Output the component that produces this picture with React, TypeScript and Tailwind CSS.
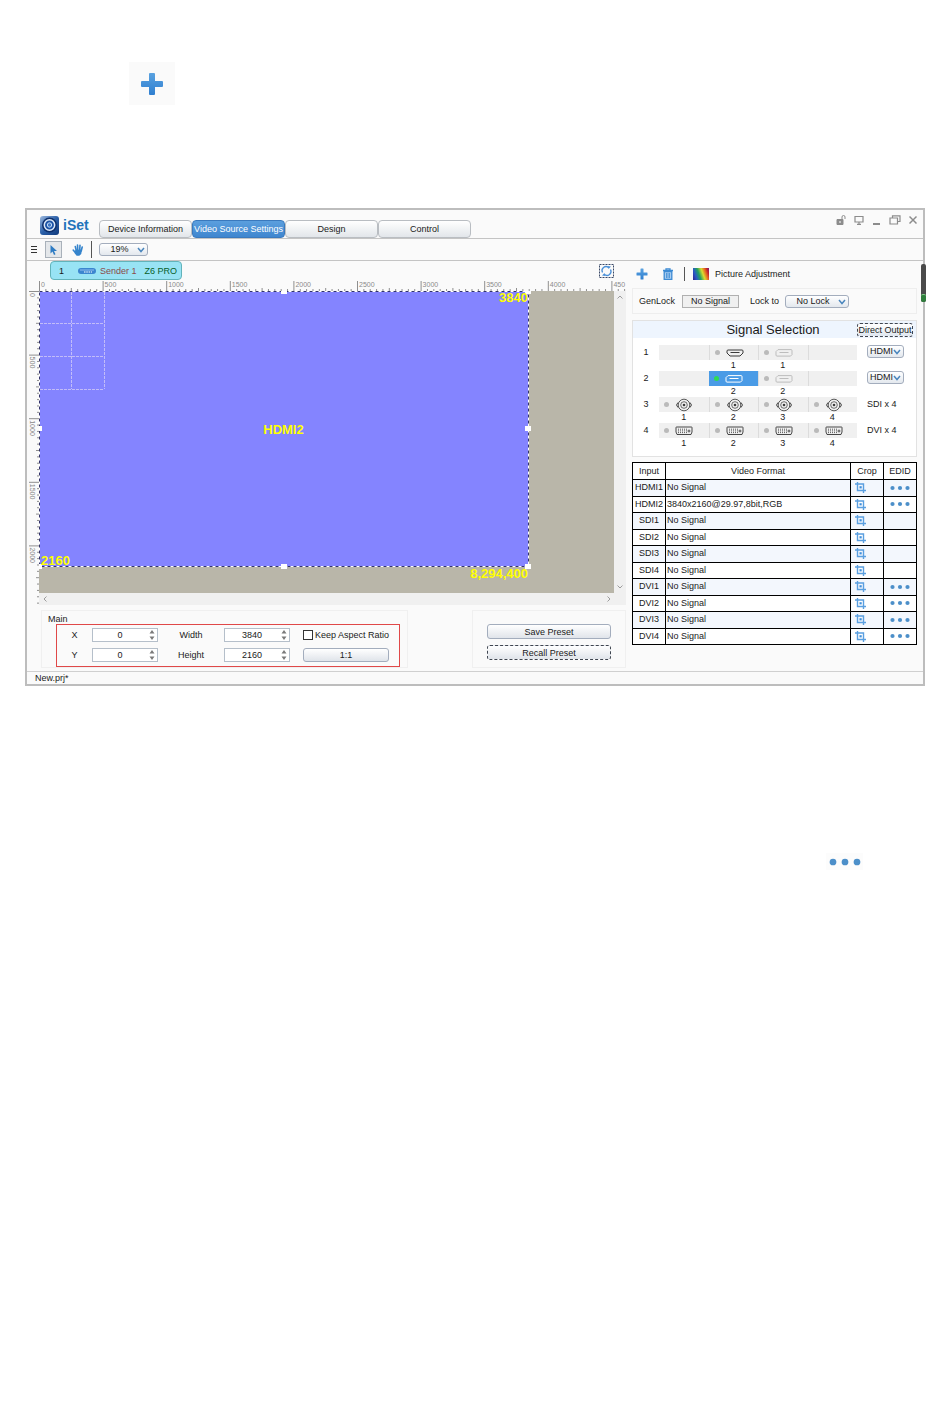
import React from 'react';
import { clsx } from 'clsx';

const SCALE = 0.1272;

const tabs = ['Device Information', 'Video Source Settings', 'Design', 'Control'];

const inputs = [
  { name: 'HDMI1', format: 'No Signal', edid: true },
  { name: 'HDMI2', format: '3840x2160@29.97,8bit,RGB', edid: true },
  { name: 'SDI1', format: 'No Signal', edid: false },
  { name: 'SDI2', format: 'No Signal', edid: false },
  { name: 'SDI3', format: 'No Signal', edid: false },
  { name: 'SDI4', format: 'No Signal', edid: false },
  { name: 'DVI1', format: 'No Signal', edid: true },
  { name: 'DVI2', format: 'No Signal', edid: true },
  { name: 'DVI3', format: 'No Signal', edid: true },
  { name: 'DVI4', format: 'No Signal', edid: true },
];

type Port = 'hdmi' | 'hdmi-off' | 'hdmi-active' | 'sdi' | 'dvi' | null;

interface SignalRow {
  row: number;
  ports: Port[];
  labels: string[];
  type: string;
  selectable: boolean;
}

const signalRows: SignalRow[] = [
  { row: 1, ports: [null, 'hdmi', 'hdmi-off', null], labels: ['', '1', '1', ''], type: 'HDMI', selectable: true },
  { row: 2, ports: [null, 'hdmi-active', 'hdmi-off', null], labels: ['', '2', '2', ''], type: 'HDMI', selectable: true },
  { row: 3, ports: ['sdi', 'sdi', 'sdi', 'sdi'], labels: ['1', '2', '3', '4'], type: 'SDI x 4', selectable: false },
  { row: 4, ports: ['dvi', 'dvi', 'dvi', 'dvi'], labels: ['1', '2', '3', '4'], type: 'DVI x 4', selectable: false },
];

const PlusIcon = ({ className }: { className?: string }) => (
  <svg viewBox="0 0 24 24" className={className}>
    <defs>
      <linearGradient id="plusFill" x1="0" y1="0" x2="0" y2="1">
        <stop offset="0" stopColor="#5aa2e0" />
        <stop offset="1" stopColor="#2f7fd0" />
      </linearGradient>
    </defs>
    <path
      d="M10 1h4a1 1 0 0 1 1 1v7h7a1 1 0 0 1 1 1v4a1 1 0 0 1-1 1h-7v7a1 1 0 0 1-1 1h-4a1 1 0 0 1-1-1v-7h-7a1 1 0 0 1-1-1v-4a1 1 0 0 1 1-1h7v-7a1 1 0 0 1 1-1z"
      fill="url(#plusFill)"
    />
  </svg>
);

const DotsIcon = ({ className }: { className?: string }) => (
  <svg viewBox="0 0 20 6" className={className} fill="#4c8fc9">
    <circle cx="2.500" cy="3" r="2.100" />
    <circle cx="10" cy="3" r="2.100" />
    <circle cx="17.500" cy="3" r="2.100" />
  </svg>
);

const CropIcon = () => (
  <svg viewBox="0 0 11 11" className="h-[11px] w-[11px]" fill="none" stroke="#5a9fe0">
    <path d="M0 2h8.500v9M2.500 0v8.500h8.500" strokeWidth="1.400" />
    <rect x="4.500" y="4.200" width="2.200" height="2.200" fill="#3f8fdc" stroke="none" />
  </svg>
);

const Logo = () => (
  <svg viewBox="0 0 19 19" className="h-[19px] w-[19px]">
    <defs>
      <linearGradient id="logoFill" x1="0" y1="0" x2="1" y2="1">
        <stop offset="0" stopColor="#9db9de" />
        <stop offset="0.500" stopColor="#2a5fa8" />
        <stop offset="1" stopColor="#123b7c" />
      </linearGradient>
    </defs>
    <rect width="19" height="19" rx="3" fill="url(#logoFill)" />
    <circle cx="9.500" cy="9" r="7.500" fill="#0d2f6b" />
    <circle cx="9.500" cy="9" r="5.200" fill="#1d54a6" stroke="#dbe8f8" strokeWidth="1.500" />
    <circle cx="9.500" cy="9" r="2.200" fill="#3f78c4" stroke="#c4dbf5" />
  </svg>
);

const PortIcon = ({ port }: { port: Exclude<Port, null> }) => {
  if (port === 'sdi') {
    return (
      <svg viewBox="0 0 18 14" className="h-[14px] w-[18px]" fill="none" stroke="#4a4a4a">
        <circle cx="9" cy="7" r="5.800" strokeWidth="0.900" />
        <circle cx="9" cy="7" r="3.300" strokeWidth="0.800" />
        <circle cx="9" cy="7" r="1.300" fill="#3c3c3c" stroke="none" />
        <path d="M3 4.500l-1.500 2.500 1.500 2.500M15 4.500l1.500 2.500-1.500 2.500" />
      </svg>
    );
  }
  if (port === 'dvi') {
    return (
      <svg viewBox="0 0 18 10" className="h-[10px] w-[18px]" fill="none" stroke="#333333">
        <path d="M1.500 1h15a0.500 0.500 0 0 1 0.500 0.500v4.500l-1 2.500h-14l-1-2.500v-4.500a0.500 0.500 0 0 1 0.500-0.500z" strokeWidth="0.900" />
        <path d="M3 3.200h9M3 4.900h9M3 6.600h9" strokeDasharray="1 1" strokeWidth="0.800" />
        <path d="M12.500 5h3M14 3.500v3" strokeWidth="0.800" />
      </svg>
    );
  }
  const color = port === 'hdmi' ? '#3a3a3a' : port === 'hdmi-off' ? '#bdbdbd' : '#ffffff';
  return (
    <svg viewBox="0 0 18 8" className="h-2 w-[18px]" fill="none" stroke={color}>
      {port === 'hdmi' ? (
        <path d="M2 1h14a1 1 0 0 1 1 1v2l-3 3h-10l-3-3v-2a1 1 0 0 1 1-1z" />
      ) : (
        <path d="M3 0.600h13a1 1 0 0 1 1 1v4l-1.500 1.500h-13.500a1 1 0 0 1-1-1v-3.500z" />
      )}
      <path d="M4.500 3.500h9" />
    </svg>
  );
};

interface SelectBoxProps {
  label: string;
  value: string;
  className: string;
}

const SelectBox: React.FC<SelectBoxProps> = ({ label, value, className }) => (
  <span className={clsx('relative inline-flex', className)}>
    <select
      aria-label={label}
      defaultValue={value}
      className="h-[13px] w-full appearance-none rounded-[3px] border border-[#a3adbd] bg-linear-to-b from-white to-[#e3e8ee] pr-2 text-center text-[9px] leading-[11px]"
    >
      <option>{value}</option>
    </select>
    <svg viewBox="0 0 8 6" className="pointer-events-none absolute top-1 right-[3px] h-[6px] w-2" fill="none" stroke="#4a86bd" strokeWidth="1.500">
      <path d="M1 1l3 3.500 3-3.500" />
    </svg>
  </span>
);

const NumberField = ({ id, label, value }: { id: string; label: string; value: string }) => (
  <>
    <label htmlFor={id} className="text-center">
      {label}
    </label>
    <div className="flex h-[14px] items-center border border-[#b5bfca] bg-white">
      <input id={id} type="text" defaultValue={value} className="w-full min-w-0 flex-1 text-center outline-none" />
      <svg viewBox="0 0 8 12" className="h-3 w-[10px] shrink-0" fill="#7a7a7a">
        <path d="M1.500 4.500l2.500-3.500 2.500 3.500zM1.500 7.500l2.500 3.500 2.500-3.500z" />
      </svg>
    </div>
  </>
);

const ticks = (max: number) => {
  const list: number[] = [];
  for (let v = 0; v <= max; v += 50) list.push(v);
  return list;
};

const rulerLabel = (v: number) => (v === 4500 ? '450' : String(v));

const HorizontalRuler = () => (
  <svg className="h-[11px] min-w-0 flex-1 overflow-hidden" stroke="#8f8f8f">
    {ticks(4600).map((v) => (
      <line key={v} x1={v * SCALE + 0.5} x2={v * SCALE + 0.5} y1={v % 500 === 0 ? 1 : v % 250 === 0 ? 8 : 9} y2="11" />
    ))}
    {ticks(4500).filter((v) => v % 500 === 0).map((v) => (
      <text key={v} x={v * SCALE + 2} y="7" fontSize="7" fill="#8a8a8a" stroke="none">
        {rulerLabel(v)}
      </text>
    ))}
  </svg>
);

const VerticalRuler = () => (
  <svg className="w-3 shrink-0 self-stretch overflow-hidden" stroke="#8f8f8f">
    {ticks(2450).map((v) => (
      <line key={v} y1={v * SCALE + 0.5} y2={v * SCALE + 0.5} x1={v % 500 === 0 ? 2 : v % 250 === 0 ? 9 : 10} x2="12" />
    ))}
    {ticks(2000).filter((v) => v % 500 === 0).map((v) => (
      <text key={v} transform={`translate(3 ${v * SCALE + 2}) rotate(90)`} fontSize="7" fill="#8a8a8a" stroke="none">
        {v}
      </text>
    ))}
  </svg>
);

const handles = [
  [245, 0],
  [489, 0],
  [0, 137],
  [489, 137],
  [0, 275],
  [245, 275],
  [489, 275],
];

const Canvas = () => (
  <div className="relative h-[302px] min-w-0 flex-1 overflow-hidden bg-[#b9b6a9]">
    <svg className="absolute top-0 left-0 h-[302px] w-[520px]" fill="none">
      <rect x="0.500" y="0.500" width="489" height="275" fill="#8484ff" stroke="#ffffff" />
      <rect x="0.500" y="0.500" width="489" height="275" stroke="#33336b" strokeDasharray="3 3" />
      <path d="M32.500 1v97M65.500 1v97M1 32.500h64M1 65.500h64M1 98.500h64" stroke="#c2bcf8" strokeDasharray="3 1" />
      {handles.map(([x, y]) => (
        <rect key={`${x}-${y}`} x={x - 3} y={y - 2} width="6" height="5" fill="#ffffff" />
      ))}
    </svg>
    <div className="absolute top-0 left-0 flex h-[276px] w-[489px] items-center justify-center text-[13px] leading-[13px] font-bold text-[#ffff00]">
      <span>HDMI2</span>
      <span className="absolute top-0 right-0">3840</span>
      <span className="absolute bottom-0 left-0.5">2160</span>
      <span className="absolute top-full right-0">8,294,400</span>
    </div>
  </div>
);

const TitleBar = () => (
  <header className="flex h-[29px] items-end border-b border-[#c4c4c4] pl-[13px]">
    <div className="flex w-[59px] items-center gap-1 self-center pt-0.5">
      <Logo />
      <span className="text-[14px] leading-4 font-bold text-[#2174bb]">iSet</span>
    </div>
    <nav className="flex">
      {tabs.map((tab) => (
        <button
          key={tab}
          type="button"
          className={clsx(
            'h-[18px] w-[93px] rounded-[4px] border whitespace-nowrap',
            tab === 'Video Source Settings'
              ? 'border-[#3a79bd] bg-linear-to-b from-[#5b9fde] to-[#3f86cf] text-white'
              : 'border-[#b9bdc2] bg-linear-to-b from-white to-[#e2e6ea]'
          )}
        >
          {tab}
        </button>
      ))}
    </nav>
    <div className="mr-[6px] mb-[13px] ml-auto flex items-center gap-2 text-[#8c8c8c]">
      <button type="button" aria-label="Lock">
        <svg viewBox="0 0 10 10" className="h-[10px] w-[10px]" fill="none" stroke="currentColor">
          <path d="M1 4.500h6v5h-6z" fill="currentColor" />
          <path d="M6 4v-2a1.500 1.500 0 0 1 3 0v2" />
          <path d="M4 6v2" stroke="#ffffff" />
        </svg>
      </button>
      <button type="button" aria-label="Screen">
        <svg viewBox="0 0 10 10" className="h-[10px] w-[10px]" fill="none" stroke="currentColor" strokeWidth="1.200">
          <path d="M1 1.500h8v5.500h-8zM3 9.300h4M5 7v2" />
        </svg>
      </button>
      <button type="button" aria-label="Minimize">
        <svg viewBox="0 0 9 10" className="h-[10px] w-[9px]" stroke="currentColor" strokeWidth="2">
          <path d="M1 9h7" />
        </svg>
      </button>
      <button type="button" aria-label="Restore">
        <svg viewBox="0 0 12 10" className="h-[10px] w-3" fill="none" stroke="currentColor" strokeWidth="1.200">
          <path d="M1 3h7.500v6h-7.500zM3.500 3v-2.200h7.500v5.700h-2.500" />
        </svg>
      </button>
      <button type="button" aria-label="Close">
        <svg viewBox="0 0 8 10" className="h-[10px] w-2" stroke="currentColor" strokeWidth="1.500">
          <path d="M0.500 1.500l7 7M7.500 1.500l-7 7" />
        </svg>
      </button>
    </div>
  </header>
);

const Toolbar = () => (
  <div className="flex h-[22px] items-center border-b border-[#c4c4c4] pl-1">
    <button type="button" aria-label="Menu" className="w-[14px]">
      <svg viewBox="0 0 6 7" className="h-[7px] w-[6px]" stroke="#333333">
        <path d="M0 0.500h6M0 3.500h6M0 6.500h6" />
      </svg>
    </button>
    <button type="button" aria-label="Select" className="flex h-[17px] w-[17px] items-center justify-center border border-[#a9b1ba] bg-[#e4e7ea]">
      <svg viewBox="0 0 8 10" className="h-[10px] w-2" fill="#2e7cc4">
        <path d="M0.500 0v8.500l2-2 1.500 3.500 1.500-0.700-1.500-3.300h3z" />
      </svg>
    </button>
    <button type="button" aria-label="Pan" className="ml-[10px]">
      <svg viewBox="0 0 12 12" className="h-3 w-3" fill="none" stroke="#3584cc" strokeWidth="1.600" strokeLinecap="round">
        <path d="M3.300 2.500l1 4M5.500 1l0.300 5M8 1.200l-0.300 5M10.200 3l-1 4M1.200 6l2.500 3" />
        <path d="M4 6.500h5l-0.500 3-1.500 1.500h-2l-1.500-2z" fill="#3584cc" />
      </svg>
    </button>
    <span className="ml-[7px] h-[17px] w-px bg-[#555555]" />
    <SelectBox label="Zoom" value="19%" className="ml-[7px] w-[49px]" />
  </div>
);

const actionButton = 'h-[15px] rounded-[3px] border bg-linear-to-b from-white to-[#e0e4ea]';

const Workspace = () => (
  <section className="flex min-w-0 flex-1 flex-col">
    <div className="flex h-[19px] items-center justify-between pr-[13px] pl-[23px]">
      <div className="flex h-[19px] w-[132px] items-center rounded-[4px] border border-[#62b3ba] bg-[#98e3f4] pl-2">
        <span className="w-[19px]">1</span>
        <svg viewBox="0 0 18 8" className="h-2 w-[18px]">
          <rect y="1" width="18" height="6" rx="3" fill="#3c86cf" />
          <path d="M2 3h14" stroke="#8dbcf0" />
          <path d="M6 5h8" stroke="#ffffff" strokeDasharray="1.500 0.800" />
        </svg>
        <span className="ml-1 text-[#8b4a4a]">Sender 1</span>
        <span className="ml-2 text-[#08602a]">Z6 PRO</span>
      </div>
      <button type="button" aria-label="Refresh">
        <svg viewBox="0 0 15 14" className="h-[14px] w-[15px]" fill="none">
          <rect x="0.500" y="0.500" width="14" height="13" stroke="#3b4a68" strokeDasharray="2 1" />
          <path d="M3.500 8.500a4 4 0 0 1 6-5M11.500 5.500a4 4 0 0 1-6 5" stroke="#4a90d8" strokeWidth="1.300" />
          <path d="M8.500 2l3.500 0.500-2.500 2.500zM6.500 12l-3.500-0.500 2.500-2.500z" fill="#4a90d8" />
        </svg>
      </button>
    </div>

    <div className="flex pl-3">
      <HorizontalRuler />
    </div>
    <div className="flex">
      <VerticalRuler />
      <div className="flex min-w-0 flex-1 flex-col pr-px">
        <div className="flex">
          <Canvas />
          <div className="flex w-3 flex-col items-center justify-between bg-[#f0f0f0] py-1">
            <svg viewBox="0 0 6 4" className="h-1 w-[6px]" fill="none" stroke="#9c9c9c">
              <path d="M0.500 3.500l2.500-2.500 2.500 2.500" />
            </svg>
            <svg viewBox="0 0 6 4" className="h-1 w-[6px]" fill="none" stroke="#9c9c9c">
              <path d="M0.500 0.500l2.500 2.500 2.500-2.500" />
            </svg>
          </div>
        </div>
        <div className="flex h-3 items-center justify-between bg-[#f0f0f0] pr-[15px] pl-1">
          <svg viewBox="0 0 4 6" className="h-[6px] w-1" fill="none" stroke="#9c9c9c">
            <path d="M3.500 0.500l-2.500 2.500 2.500 2.500" />
          </svg>
          <svg viewBox="0 0 4 6" className="h-[6px] w-1" fill="none" stroke="#9c9c9c">
            <path d="M0.500 0.500l2.500 2.500-2.500 2.500" />
          </svg>
        </div>
      </div>
    </div>

    <div className="mt-[5px] flex justify-between pr-px pl-[14px]">
      <div className="h-[58px] w-[367px] border border-[#f0f0f0] pt-[3px] pl-[14px]">
        <h2 className="-ml-2 leading-[10px]">Main</h2>
        <div className="grid w-[344px] grid-cols-[35px_66px_66px_66px_1fr] gap-y-[6px] border border-[#e04848] pt-[3px] pr-[10px] pb-1 leading-[14px]">
          <NumberField id="pos-x" label="X" value="0" />
          <NumberField id="width" label="Width" value="3840" />
          <label className="ml-[13px] flex items-center gap-0.5 whitespace-nowrap">
            <input type="checkbox" className="h-[10px] w-[10px] appearance-none border border-[#333333] bg-white" />
            Keep Aspect Ratio
          </label>
          <NumberField id="pos-y" label="Y" value="0" />
          <NumberField id="height" label="Height" value="2160" />
          <button type="button" className="ml-[13px] h-[14px] rounded-[3px] border border-[#a3adbd] bg-linear-to-b from-white to-[#e0e4ea] leading-3">
            1:1
          </button>
        </div>
      </div>
      <div className="flex h-[58px] w-[154px] flex-col gap-[6px] border border-[#f0f0f0] px-[14px] pt-[13px]">
        <button type="button" className={clsx(actionButton, 'border-[#a3adbd]')}>
          Save Preset
        </button>
        <button type="button" className={clsx(actionButton, 'border-dashed border-[#3f4550]')}>
          Recall Preset
        </button>
      </div>
    </div>
  </section>
);

const SignalSelection = () => (
  <div className="mt-[6px] h-[137px] border border-[#e2e2e2] bg-white">
    <div className="grid h-[17px] grid-cols-[1fr_auto_1fr] items-center bg-[#eef5fe] pr-[3px]">
      <span />
      <h2 className="text-[13px] leading-4">Signal Selection</h2>
      <button type="button" className="h-[14px] w-[56px] justify-self-end rounded-[3px] border border-dashed border-[#3f4550] bg-linear-to-b from-white to-[#dfe6ef] leading-3 whitespace-nowrap">
        Direct Output
      </button>
    </div>
    <div className="mt-[7px] flex flex-col">
      {signalRows.map((item) => (
        <div key={item.row} className="flex h-[26px] leading-[15px]">
          <span className="w-[26px] text-center">{item.row}</span>
          <div className="grid flex-1 grid-cols-4">
            {item.ports.map((port, i) => (
              <div key={i} className="flex flex-col">
                <button
                  type="button"
                  aria-label={`${item.type} ${item.labels[i]}`}
                  disabled={!port}
                  className={clsx(
                    'flex h-[15px] items-center pl-[5px]',
                    port === 'hdmi-active' ? 'bg-[#4a9be6]' : 'bg-[#f0f0f0]',
                    i > 0 && port !== 'hdmi-active' && 'border-l border-[#dcdcdc]'
                  )}
                >
                  {port && (
                    <>
                      <span className={clsx('mr-[6px] h-[5px] w-[5px] rounded-full', port === 'hdmi-active' ? 'bg-[#2edb54]' : 'bg-[#bababa]')} />
                      <PortIcon port={port} />
                    </>
                  )}
                </button>
                <span className="text-center leading-[11px]">{item.labels[i]}</span>
              </div>
            ))}
          </div>
          <div className="flex w-[59px] items-start pl-[10px]">
            {item.selectable ? (
              <SelectBox label={`Row ${item.row} type`} value={item.type} className="w-[37px]" />
            ) : (
              <span>{item.type}</span>
            )}
          </div>
        </div>
      ))}
    </div>
  </div>
);

const InputTable = () => (
  <table className="mt-[5px] h-[183px] w-full table-fixed border-collapse bg-white text-[9px] leading-[11px]">
    <colgroup>
      <col className="w-[33px]" />
      <col />
      <col className="w-[33px]" />
      <col className="w-[33px]" />
    </colgroup>
    <thead>
      <tr className="h-[17px]">
        {['Input', 'Video Format', 'Crop', 'EDID'].map((head) => (
          <th key={head} className="border border-black p-0 font-normal">
            {head}
          </th>
        ))}
      </tr>
    </thead>
    <tbody>
      {inputs.map((item) => (
        <tr key={item.name} className="odd:bg-[#f3f7fd]">
          <td className="border border-black p-0 text-center">{item.name}</td>
          <td className="border border-black p-0 pl-px">{item.format}</td>
          <td className="border border-black p-0 pl-1">
            <button type="button" aria-label={`Crop ${item.name}`} className="block">
              <CropIcon />
            </button>
          </td>
          <td className="border border-black p-0">
            {item.edid && (
              <button type="button" aria-label={`EDID ${item.name}`} className="mx-auto block">
                <DotsIcon className="h-[6px] w-5" />
              </button>
            )}
          </td>
        </tr>
      ))}
    </tbody>
  </table>
);

const SidePanel = () => (
  <aside className="w-[296px] shrink-0 pr-[6px] pl-[5px]">
    <div className="flex h-[26px] items-center pl-1">
      <button type="button" aria-label="Add">
        <PlusIcon className="h-3 w-3" />
      </button>
      <button type="button" aria-label="Delete" className="ml-[14px]">
        <svg viewBox="0 0 12 12" className="h-3 w-3" fill="none" stroke="#3d8bd4">
          <path d="M1 2.500h10M4 2v-1.200h4v1.200" strokeWidth="1.300" />
          <path d="M2.200 3.500h7.600v8h-7.600z" fill="#a9cdf0" strokeWidth="1.300" />
          <path d="M4.500 5v5M6 5v5M7.500 5v5" strokeWidth="0.800" />
        </svg>
      </button>
      <span className="ml-[10px] h-[14px] w-px bg-[#555555]" />
      <button type="button" className="ml-2 flex items-center gap-[6px]">
        <span className="h-3 w-4 bg-[linear-gradient(70deg,#30208a_0%,#2a58c8_20%,#22a060_40%,#d8dc30_60%,#e87020_75%,#c02030_88%,#702080_100%)]" />
        Picture Adjustment
      </button>
    </div>
    <div className="mt-px flex h-[26px] items-center border border-[#eeeeee] pl-[6px]">
      <label htmlFor="genlock" className="w-[43px]">
        GenLock
      </label>
      <input id="genlock" readOnly value="No Signal" className="h-[13px] w-[57px] border border-[#b0b0b0] bg-[#f0f0f0] text-center text-[9px]" />
      <span className="ml-[11px]">Lock to</span>
      <SelectBox label="Lock to" value="No Lock" className="ml-[6px] w-[64px]" />
    </div>
    <SignalSelection />
    <InputTable />
  </aside>
);

const App: React.FC = () => {
  return (
    <main className="flex flex-col bg-white pt-[62px] font-['Liberation_Sans',Arial,sans-serif] text-[9px] leading-3 text-[#1a1a1a]">
      <button type="button" aria-label="Add" className="ml-[129px] flex h-[43px] w-[46px] items-center justify-center bg-[#fafafa]">
        <PlusIcon className="h-6 w-6" />
      </button>

      <div className="relative mx-[25px] mt-[103px] border-2 border-[#bdbdbd] bg-[#fafafa]">
        <TitleBar />
        <Toolbar />
        <div className="flex h-[410px]">
          <Workspace />
          <SidePanel />
        </div>
        <footer className="h-[13px] border-t border-[#d0d0d0] pl-2">New.prj*</footer>
        <div className="absolute top-[54px] -right-[3px] flex h-[38px] w-[5px] flex-col justify-end rounded-[2px] bg-[#4a4a4a]">
          <span className="h-2 rounded-[2px] border-t border-[#7fd08a] bg-[#2f7d3c]" />
        </div>
      </div>

      <button type="button" aria-label="More" className="mt-[167px] mr-[87px] flex h-[17px] w-[37px] items-center justify-center self-end bg-[#fcfcfc]">
        <DotsIcon className="h-[10px] w-8" />
      </button>
    </main>
  );
};

export default App;
